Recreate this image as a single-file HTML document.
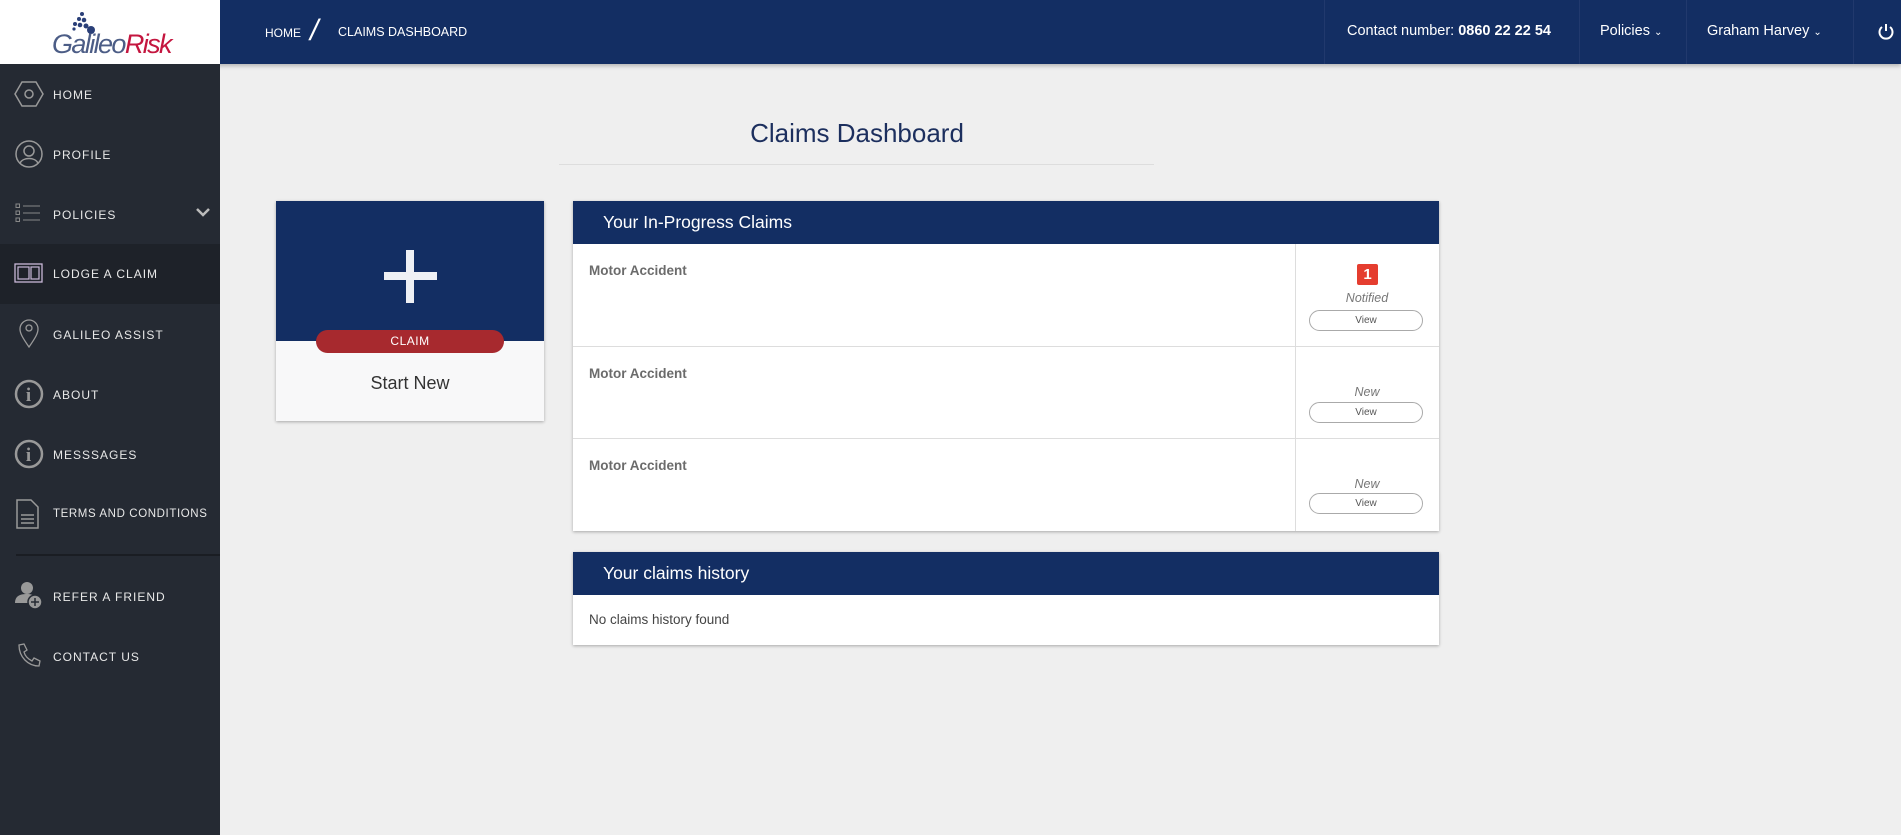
<!DOCTYPE html>
<html><head><meta charset="utf-8"><style>
*{box-sizing:border-box;margin:0;padding:0}
body{width:1901px;height:835px;overflow:hidden;background:#efefef;font-family:"Liberation Sans",sans-serif;position:relative}
.abs{position:absolute;white-space:nowrap}
#top{left:0;top:0;width:1901px;height:64px;background:#132e63;box-shadow:0 2px 4px rgba(0,0,0,.25)}
#logo{left:0;top:0;width:220px;height:64px;background:#fff}
#side{left:0;top:64px;width:220px;height:771px;background:#252a33}
.item{position:absolute;left:0;width:220px;height:60px;color:#e8e8e8;font-size:12px;letter-spacing:1px;white-space:nowrap}
.item span{position:absolute;left:53px;top:23px}
.item svg{position:absolute;left:14px;top:14px}
.sep{position:absolute;top:0;width:1px;height:64px;background:#21396d}
.hdr{color:#fff;font-size:14.5px;top:23px}
.panel{background:#fff;box-shadow:0 1px 3px rgba(0,0,0,.3)}
.ph{background:#132e63;color:#fff;font-size:17.5px;height:43px;padding:11px 0 0 30px}
.row{position:absolute;left:0;width:866px;border-bottom:1px solid #ddd}
.ma{position:absolute;left:16px;top:19px;font-size:13.5px;font-weight:bold;color:#6b6b6b}
.st{position:absolute;left:0;width:144px;text-align:center;font-size:12.5px;font-style:italic;color:#777}
.vb{position:absolute;left:14px;width:114px;height:21px;border:1px solid #aaa;border-radius:11px;font-size:10px;color:#555;text-align:center;line-height:19px}
</style></head><body>
<div id="top" class="abs"></div>
<div id="logo" class="abs">
<svg class="abs" style="left:70px;top:10px" width="40" height="26"><g fill="#2a3f78"><circle cx="12" cy="4" r="2"/><circle cx="9" cy="9" r="2"/><circle cx="14" cy="10" r="2.3"/><circle cx="5" cy="14" r="2"/><circle cx="10" cy="15" r="2.3"/><circle cx="16" cy="16" r="2.5"/><circle cx="4" cy="19" r="1.6"/><circle cx="21" cy="20" r="4"/></g></svg>
<div class="abs" style="left:52px;top:28px;font-size:27px;font-style:italic;letter-spacing:-1.6px;line-height:32px"><span style="color:#4c5d86">Galileo</span><span style="color:#c4163f">Risk</span></div>
</div>
<div class="abs" style="left:265px;top:26px;color:#fff;font-size:12px">HOME</div>
<div class="abs" style="left:310px;top:14px;color:#fff;font-size:30px;font-style:italic;font-weight:300">/</div>
<div class="abs" style="left:338px;top:25px;color:#fff;font-size:12.5px">CLAIMS DASHBOARD</div>
<div class="sep abs" style="left:1324px"></div><div class="sep abs" style="left:1579px"></div><div class="sep abs" style="left:1686px"></div><div class="sep abs" style="left:1853px"></div>
<div class="abs hdr" style="left:1347px">Contact number: <b>0860 22 22 54</b></div>
<div class="abs hdr" style="left:1600px">Policies <span style="font-size:10px">&#8964;</span></div>
<div class="abs hdr" style="left:1707px">Graham Harvey <span style="font-size:10px">&#8964;</span></div>
<svg class="abs" style="left:1878px;top:23px" width="16" height="17"><path d="M4 4A6.5 6.5 0 1 0 12 4M8 1v7" stroke="#fff" stroke-width="2" fill="none"/></svg>

<div id="side" class="abs">
<div class="item" style="top:1px"><svg width="30" height="30"><path d="M8 3h14l7 12-7 12H8L1 15z" fill="none" stroke="#999" stroke-width="1.5"/><circle cx="15" cy="15" r="4" fill="none" stroke="#999" stroke-width="1.5"/></svg><span>HOME</span></div>
<div class="item" style="top:61px"><svg width="30" height="30"><circle cx="15" cy="15" r="13" fill="none" stroke="#999" stroke-width="1.5"/><circle cx="15" cy="12" r="5" fill="none" stroke="#999" stroke-width="1.5"/><path d="M6 24c3-6 15-6 18 0" fill="none" stroke="#999" stroke-width="1.5"/></svg><span>PROFILE</span></div>
<div class="item" style="top:121px"><svg width="30" height="30"><g fill="none" stroke="#888" stroke-width="1"><rect x="2" y="5" width="3.5" height="3.5"/><rect x="2" y="12" width="3.5" height="3.5"/><rect x="2" y="19" width="3.5" height="3.5"/><path d="M9 7h17M9 14h17M9 21h17"/></g></svg><span>POLICIES</span><svg style="left:196px;top:22px" width="14" height="10"><path d="M1 2l6 6 6-6" fill="none" stroke="#bbb" stroke-width="2.5"/></svg></div>
<div class="item" style="top:180px;background:#1e2229"><svg width="30" height="30"><rect x="1" y="6" width="27" height="18" fill="none" stroke="#c9b8d8" stroke-width="1.3"/><rect x="4" y="9" width="11" height="12" fill="none" stroke="#c9b8d8" stroke-width="1.2"/><rect x="17" y="9" width="8" height="12" fill="none" stroke="#c9b8d8" stroke-width="1.2"/></svg><span>LODGE A CLAIM</span></div>
<div class="item" style="top:241px"><svg width="30" height="30"><path d="M15 28C8 18 6 14 6 10a9 9 0 0 1 18 0c0 4-2 8-9 18z" fill="none" stroke="#999" stroke-width="1.3"/><circle cx="15" cy="9" r="3" fill="none" stroke="#999" stroke-width="1.3"/></svg><span>GALILEO ASSIST</span></div>
<div class="item" style="top:301px"><svg width="30" height="30"><circle cx="15" cy="15" r="13" fill="none" stroke="#999" stroke-width="2.5"/><text x="15" y="22" text-anchor="middle" font-family="Liberation Serif" font-weight="bold" font-size="19" fill="#999">i</text></svg><span>ABOUT</span></div>
<div class="item" style="top:361px"><svg width="30" height="30"><circle cx="15" cy="15" r="13" fill="none" stroke="#999" stroke-width="2.5"/><text x="15" y="22" text-anchor="middle" font-family="Liberation Serif" font-weight="bold" font-size="19" fill="#999">i</text></svg><span>MESSSAGES</span></div>
<div class="item" style="top:421px"><svg width="30" height="30"><path d="M3 1h14l7 7v21H3z" fill="none" stroke="#999" stroke-width="1.5"/><path d="M7 16h13M7 20h13M7 24h13" stroke="#999" stroke-width="1.5"/></svg><span style="letter-spacing:.6px;font-size:11.5px">TERMS AND CONDITIONS</span></div>
<div class="abs" style="left:16px;top:490px;width:204px;height:2px;background:#1a1d23"></div>
<div class="item" style="top:503px"><svg width="30" height="30"><circle cx="13" cy="7" r="6" fill="#999"/><path d="M1 22c0-7 5-9 12-9s8 3 8 5v4z" fill="#999"/><circle cx="21" cy="21" r="7" fill="#999" stroke="#252a33" stroke-width="1.5"/><path d="M17 21h8M21 17v8" stroke="#252a33" stroke-width="1.5"/></svg><span>REFER A FRIEND</span></div>
<div class="item" style="top:563px"><svg width="30" height="30"><path d="M5 4l5-1 3 6-3 2c1 4 4 7 8 9l2-3 6 3-1 5c-11 0-20-9-20-21z" fill="none" stroke="#999" stroke-width="1.3"/></svg><span>CONTACT US</span></div>
</div>

<div class="abs" style="left:560px;top:118px;width:594px;text-align:center;font-size:26px;color:#1c2f5e">Claims Dashboard</div>
<div class="abs" style="left:559px;top:164px;width:595px;height:1px;background:#ddd"></div>

<div class="abs panel" style="left:276px;top:201px;width:268px;height:220px;background:#f8f8f9">
<div class="abs" style="left:0;top:0;width:268px;height:140px;background:#132e63"></div>
<div class="abs" style="left:130px;top:49px;width:8px;height:53px;background:#eef0f4"></div>
<div class="abs" style="left:108px;top:71px;width:53px;height:8px;background:#eef0f4"></div>
<div class="abs" style="left:40px;top:129px;width:188px;height:23px;border-radius:12px;background:#a7292e;color:#fff;font-size:12px;text-align:center;line-height:23px;letter-spacing:.5px">CLAIM</div>
<div class="abs" style="left:0;top:172px;width:268px;text-align:center;font-size:18px;color:#333">Start New</div>
</div>

<div class="abs panel" style="left:573px;top:201px;width:866px;height:330px">
<div class="ph">Your In-Progress Claims</div>
<div class="abs" style="left:722px;top:43px;width:1px;height:287px;background:#ddd"></div>
<div class="row" style="top:43px;height:103px"><div class="ma">Motor Accident</div>
<div class="abs" style="left:722px;top:0;width:144px;height:102px">
<div class="abs" style="left:62px;top:20px;width:21px;height:21px;background:#e53d2f;color:#fff;font-weight:bold;font-size:15px;text-align:center;line-height:21px;border-radius:2px">1</div>
<div class="st" style="top:47px">Notified</div><div class="vb" style="top:66px">View</div></div></div>
<div class="row" style="top:146px;height:92px"><div class="ma">Motor Accident</div>
<div class="abs" style="left:722px;top:0;width:144px;height:92px"><div class="st" style="top:38px">New</div><div class="vb" style="top:55px">View</div></div></div>
<div class="row" style="top:238px;height:92px;border-bottom:0"><div class="ma">Motor Accident</div>
<div class="abs" style="left:722px;top:0;width:144px;height:92px"><div class="st" style="top:38px">New</div><div class="vb" style="top:54px">View</div></div></div>
</div>

<div class="abs panel" style="left:573px;top:552px;width:866px;height:93px">
<div class="ph">Your claims history</div>
<div class="abs" style="left:16px;top:60px;font-size:13.5px;color:#444">No claims history found</div>
</div>
</body></html>
